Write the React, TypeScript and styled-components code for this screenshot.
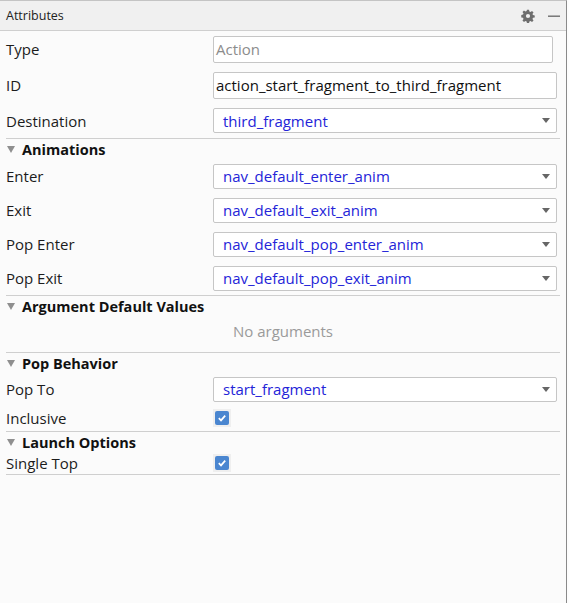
import * as React from 'react';
import styled, { createGlobalStyle } from 'styled-components';

const Global = createGlobalStyle`
    html, body {
        margin: 0;
        padding: 0;
        background: #fdfdfd;
    }
    body {
        font-family: "Open Sans", "Noto Sans", sans-serif;
        color: #1c1c1c;
    }
`;

const Panel = styled.div`
    width: 567px;
    height: 603px;
    box-sizing: border-box;
    border-right: 1px solid #8a8a8a;
    border-top: 1px solid #c4c4c4;
    background: #fbfbfb;
    display: flex;
    flex-direction: column;
`;

const Header = styled.header`
    height: 30px;
    flex-shrink: 0;
    box-sizing: border-box;
    background: #f0f0f0;
    border-bottom: 1px solid #cfcfcf;
    display: flex;
    align-items: center;
    padding: 0 4px 0 6px;
    font-size: 12.5px;
    color: #222;
`;

const HeaderTitle = styled.span`
    flex: 1;
`;

const HeaderButton = styled.span`
    width: 16px;
    height: 16px;
    display: flex;
    align-items: center;
    justify-content: center;
    margin-left: 10px;
`;

const Body = styled.div`
    padding: 0 6px;
    display: flex;
    flex-direction: column;
`;

const Row = styled.div<{ $h?: number }>`
    display: grid;
    grid-template-columns: 207px 1fr;
    align-items: center;
    height: ${(p) => p.$h ?? 36}px;
    padding-right: 3px;
`;

const Label = styled.span`
    font-size: 15px;
    color: #1c1c1c;
`;

const Field = styled.div<{ $muted?: boolean; $inset?: number }>`
    height: 27px;
    box-sizing: border-box;
    border: 1px solid #c6c6c6;
    border-radius: 2px;
    background: #fff;
    display: flex;
    align-items: center;
    padding: 0 2px;
    margin-right: ${(p) => p.$inset ?? 0}px;
    font-size: 15px;
    color: ${(p) => (p.$muted ? '#8c8c8c' : '#111')};
    white-space: nowrap;
    overflow: hidden;
`;

const Select = styled.div`
    height: 25px;
    box-sizing: border-box;
    border: 1px solid #c6c6c6;
    border-radius: 2px;
    background: #fff;
    display: flex;
    align-items: center;
    padding: 0 6px 0 9px;
    font-size: 15px;
    color: #2424d8;
`;

const SelectText = styled.span`
    flex: 1;
`;

const Arrow = styled.span`
    width: 0;
    height: 0;
    border-left: 4px solid transparent;
    border-right: 4px solid transparent;
    border-top: 5px solid #666;
`;

const Divider = styled.div`
    height: 1px;
    background: #cfcfcf;
`;

const Section = styled.div`
    display: flex;
    align-items: center;
    height: 20px;
    font-size: 14.5px;
    font-weight: 700;
    color: #111;
`;

const Caret = styled.span`
    width: 0;
    height: 0;
    border-left: 4px solid transparent;
    border-right: 4px solid transparent;
    border-top: 7px solid #8f8f8f;
    margin: 0 7px 0 1px;
`;

const Empty = styled.div`
    height: 36px;
    box-sizing: border-box;
    display: flex;
    align-items: center;
    justify-content: center;
    font-size: 15px;
    color: #9a9a9a;
    padding-bottom: 6px;
`;

const CheckWrap = styled.span`
    width: 18px;
    height: 18px;
    background: #efefef;
    display: flex;
    align-items: center;
    justify-content: center;
`;

const Check = styled.span`
    width: 14px;
    height: 14px;
    border-radius: 2px;
    background: #4a86d0;
    display: flex;
    align-items: center;
    justify-content: center;
`;

function Gear() {
    return (
        <svg width="14" height="14" viewBox="0 0 16 16">
            <path
                fill="#6e6e6e"
                d="M6.8 0.8h2.4l0.4 2 1.3 0.6 1.7-1.2 1.7 1.7-1.2 1.7 0.6 1.3 2 0.4v2.4l-2 0.4-0.6 1.3 1.2 1.7-1.7 1.7-1.7-1.2-1.3 0.6-0.4 2H6.8l-0.4-2-1.3-0.6-1.7 1.2-1.7-1.7 1.2-1.7-0.6-1.3-2-0.4V6.8l2-0.4 0.6-1.3-1.2-1.7 1.7-1.7 1.7 1.2 1.3-0.6z M8 5.6a2.4 2.4 0 1 0 0 4.8a2.4 2.4 0 1 0 0-4.8z"
                fillRule="evenodd"
            />
        </svg>
    );
}

function Minus() {
    return (
        <svg width="14" height="14" viewBox="0 0 14 14">
            <rect x="1" y="6.5" width="12" height="1.4" fill="#6e6e6e" />
        </svg>
    );
}

function Checkbox() {
    return (
        <CheckWrap>
            <Check>
                <svg width="10" height="10" viewBox="0 0 10 10">
                    <path d="M1.8 5.2 L4 7.4 L8.2 2.6" stroke="#fff" strokeWidth="1.7" fill="none" />
                </svg>
            </Check>
        </CheckWrap>
    );
}

function Dropdown(props: { value: string }) {
    return (
        <Select>
            <SelectText>{props.value}</SelectText>
            <Arrow />
        </Select>
    );
}

function SectionHeader(props: { title: string }) {
    return (
        <Section>
            <Caret />
            {props.title}
        </Section>
    );
}

export default function App(): React.ReactElement {
    return (
        <>
            <Global />
            <Panel>
                <Header>
                    <HeaderTitle>Attributes</HeaderTitle>
                    <HeaderButton>
                        <Gear />
                    </HeaderButton>
                    <HeaderButton>
                        <Minus />
                    </HeaderButton>
                </Header>
                <Body>
                    <Row>
                        <Label>Type</Label>
                        <Field $muted $inset={4}>Action</Field>
                    </Row>
                    <Row>
                        <Label>ID</Label>
                        <Field>action_start_fragment_to_third_fragment</Field>
                    </Row>
                    <Row $h={35}>
                        <Label>Destination</Label>
                        <Dropdown value="third_fragment" />
                    </Row>
                    <Divider />
                    <SectionHeader title="Animations" />
                    <Row $h={34}>
                        <Label>Enter</Label>
                        <Dropdown value="nav_default_enter_anim" />
                    </Row>
                    <Row $h={34}>
                        <Label>Exit</Label>
                        <Dropdown value="nav_default_exit_anim" />
                    </Row>
                    <Row $h={34}>
                        <Label>Pop Enter</Label>
                        <Dropdown value="nav_default_pop_enter_anim" />
                    </Row>
                    <Row $h={34}>
                        <Label>Pop Exit</Label>
                        <Dropdown value="nav_default_pop_exit_anim" />
                    </Row>
                    <Divider />
                    <SectionHeader title="Argument Default Values" />
                    <Empty>No arguments</Empty>
                    <Divider />
                    <SectionHeader title="Pop Behavior" />
                    <Row $h={32}>
                        <Label>Pop To</Label>
                        <Dropdown value="start_fragment" />
                    </Row>
                    <Row $h={26}>
                        <Label>Inclusive</Label>
                        <Checkbox />
                    </Row>
                    <Divider />
                    <SectionHeader title="Launch Options" />
                    <Row $h={22}>
                        <Label>Single Top</Label>
                        <Checkbox />
                    </Row>
                    <Divider />
                </Body>
            </Panel>
        </>
    );
}
